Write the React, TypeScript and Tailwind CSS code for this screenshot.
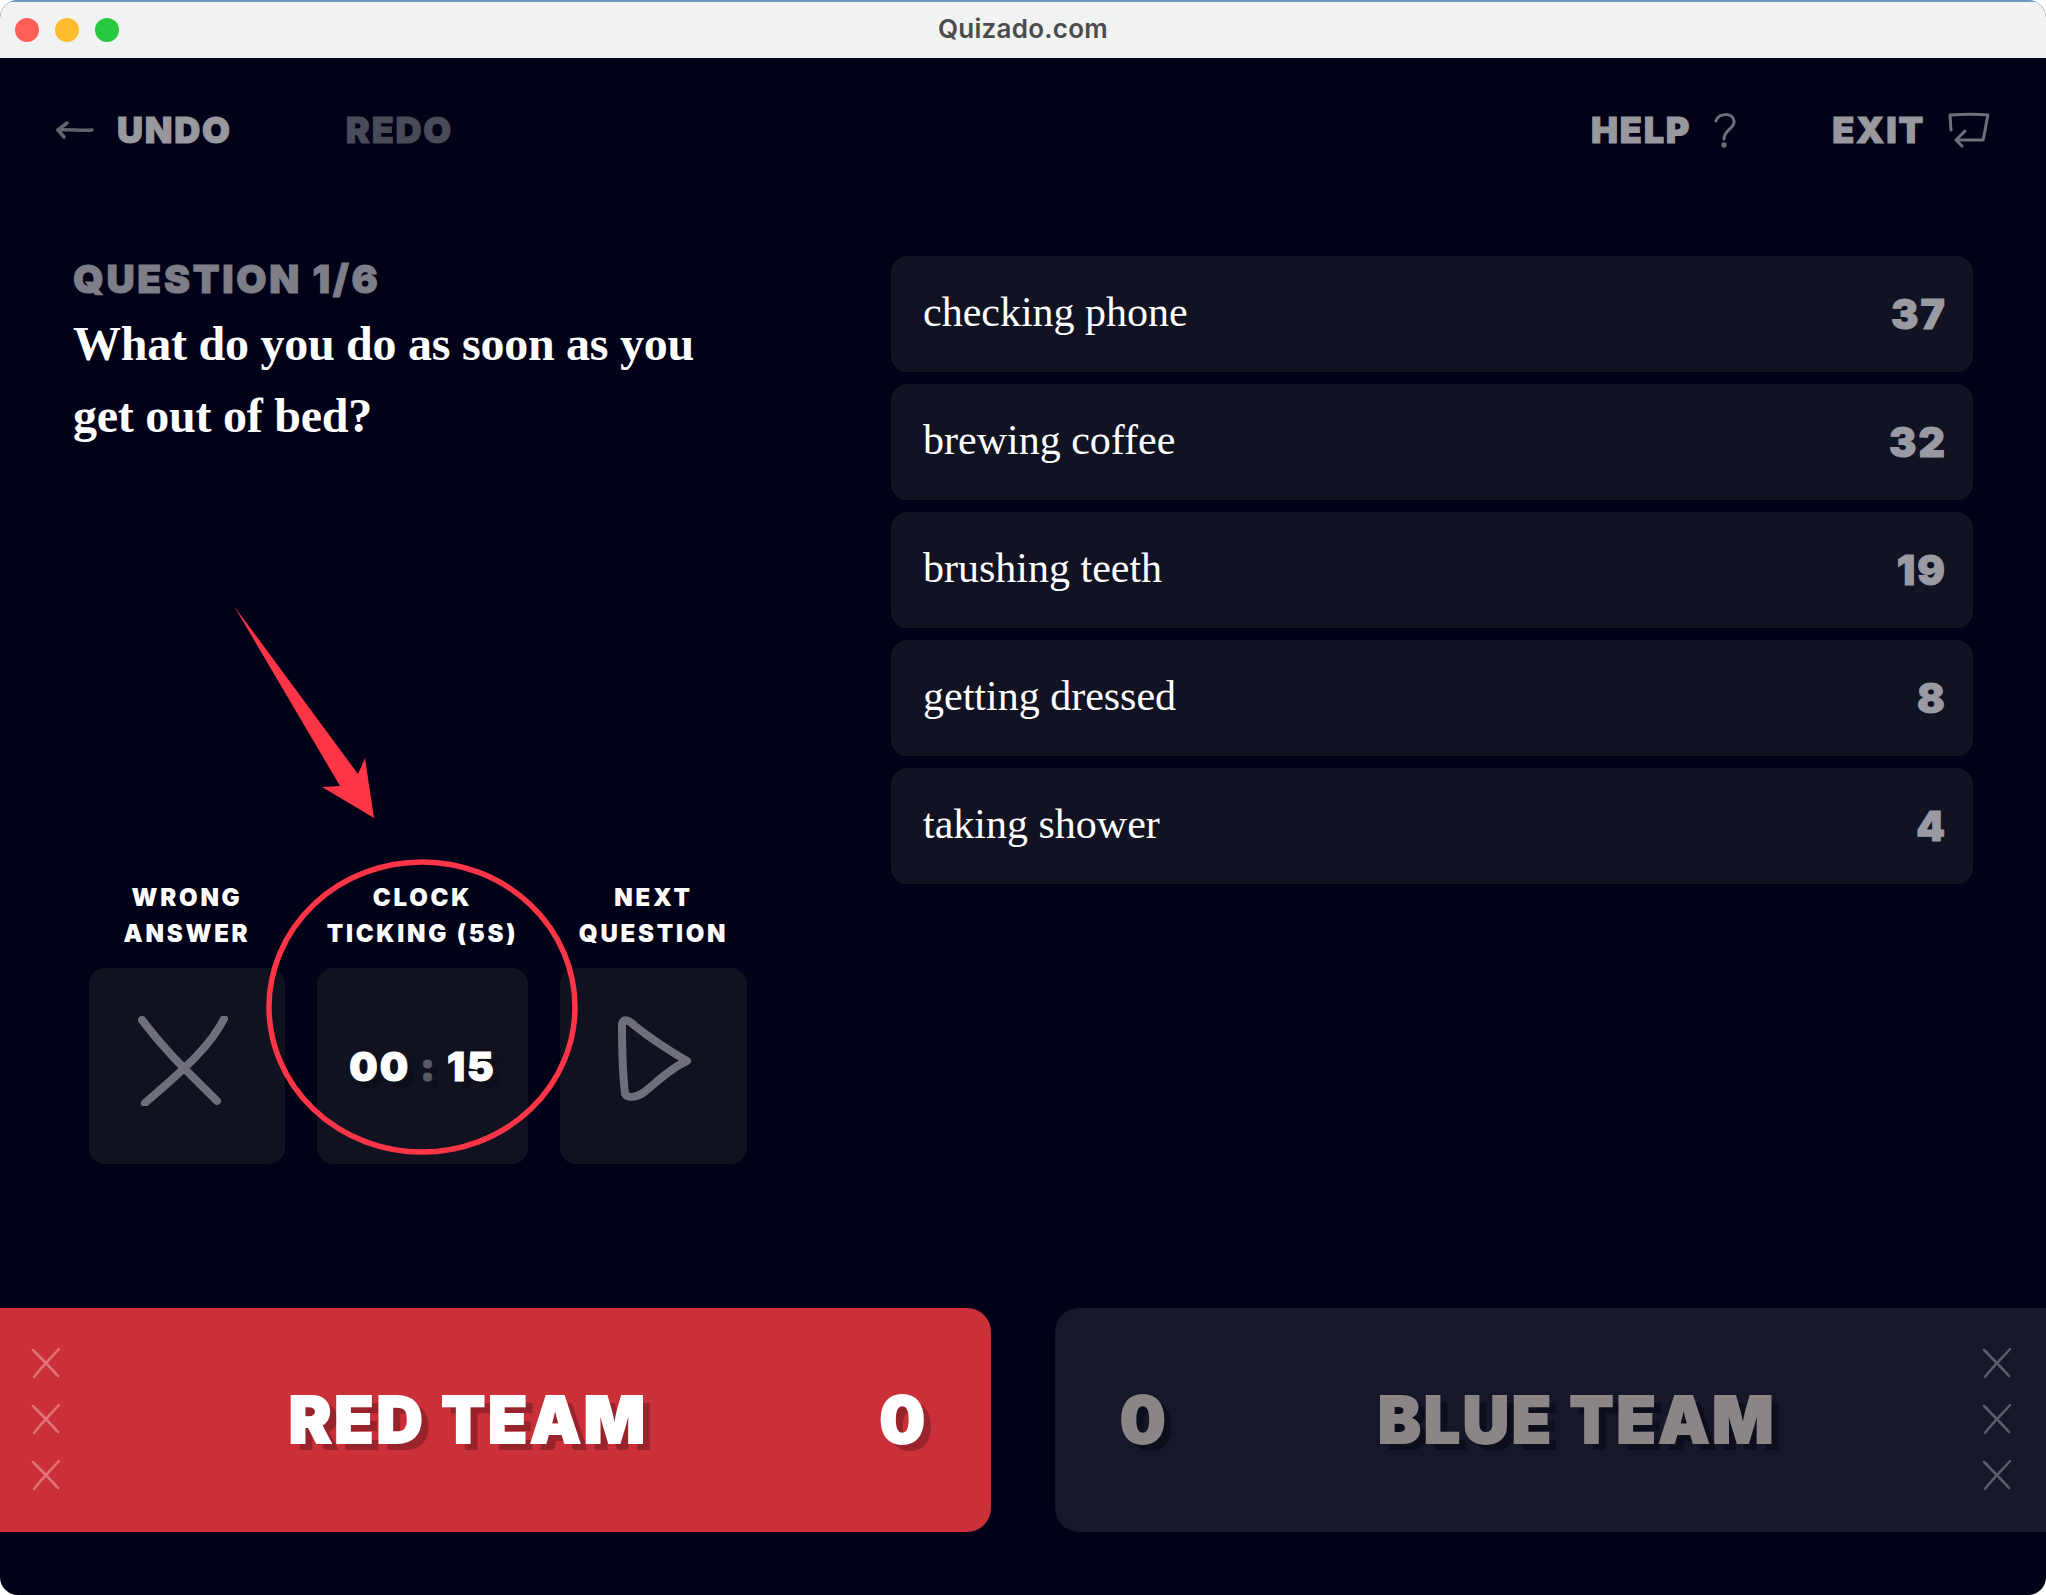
import React from 'react';

const display = "font-['Inter','Liberation_Sans',sans-serif] font-black tracking-[0.05em] [-webkit-text-stroke:1px_currentColor]";
const heavy = "font-['Inter','Liberation_Sans',sans-serif] font-black tracking-[0.045em] [-webkit-text-stroke:2px_currentColor]";
const slab = "font-['Liberation_Serif','DejaVu_Serif',serif]";

const answers = [
  { text: 'checking phone', points: 37 },
  { text: 'brewing coffee', points: 32 },
  { text: 'brushing teeth', points: 19 },
  { text: 'getting dressed', points: 8 },
  { text: 'taking shower', points: 4 },
];

function Strike({ className }: { className: string }) {
  return (
    <svg width="30" height="30" viewBox="0 0 30 30" fill="none" className={className} stroke="currentColor" strokeWidth="2.5" strokeLinecap="round">
      <path d="M2 2 C 10 10, 20 20, 27 28" />
      <path d="M28 1 C 20 10, 10 20, 3 29" />
    </svg>
  );
}

function TeamStrikes({ className }: { className: string }) {
  return (
    <div className="flex flex-col gap-[26px] -mt-[2px]">
      <Strike className={className} />
      <Strike className={className} />
      <Strike className={className} />
    </div>
  );
}

function ControlLabel({ children }: { children: React.ReactNode }) {
  return <div className="font-['Inter',sans-serif] font-black tracking-[0.115em] text-white text-[24px] leading-[36px] text-center whitespace-nowrap h-[72px] pt-[1px]">{children}</div>;
}

export default function App() {
  return (
    <div className="w-[2046px] h-[1595px] bg-white overflow-hidden">
      <div className="h-full rounded-[18px] overflow-hidden flex flex-col bg-[#010118]">
        {/* title bar */}
        <div className="relative h-[58px] shrink-0 bg-[#f1f3f2] border-t-2 border-[#6a9bc8] flex items-center justify-center pb-[3px]">
          <div className="absolute left-[15px] top-[16px] flex gap-[16px]">
            <span className="w-[24px] h-[24px] rounded-full bg-[#ff5f57]" />
            <span className="w-[24px] h-[24px] rounded-full bg-[#febc2e]" />
            <span className="w-[24px] h-[24px] rounded-full bg-[#28c840]" />
          </div>
          <span className="font-['Inter',sans-serif] font-semibold text-[26px] tracking-[0.01em] text-[#4c4c4c]">Quizado.com</span>
        </div>

        {/* top actions */}
        <div className="h-[144px] shrink-0 flex items-center justify-between pl-[56px] pr-[56px]">
          <div className="flex items-center">
            <svg width="38" height="20" viewBox="0 0 38 20" fill="none" stroke="#63636f" strokeWidth="3.5" strokeLinecap="round" strokeLinejoin="round" className="mr-[23px]">
              <path d="M2 10 C 12 9, 26 11, 36 10" />
              <path d="M11 3 L2 10 L8 17" />
            </svg>
            <span className={`${display} text-[36px] leading-none text-[#98989f]`}>UNDO</span>
            <span className={`${display} text-[36px] leading-none text-[#4a4b59] ml-[114px]`}>REDO</span>
          </div>
          <div className="flex items-center">
            <span className={`${display} text-[36px] leading-none text-[#98989f]`}>HELP</span>
            <svg width="22" height="36" viewBox="0 0 22 36" fill="none" stroke="#6f6f7b" strokeWidth="3" strokeLinecap="round" className="ml-[23px]">
              <path d="M2 9 C 4 1, 19 0, 20 9 C 21 17, 10 17, 10 27" />
              <circle cx="10" cy="33" r="1.2" />
            </svg>
            <span className={`${display} text-[36px] leading-none text-[#98989f] ml-[96px]`}>EXIT</span>
            <svg width="42" height="38" viewBox="0 0 42 38" fill="none" stroke="#6f6f7b" strokeWidth="3" strokeLinecap="round" strokeLinejoin="round" className="ml-[23px]">
              <path d="M3 19 L2 4 C 15 3, 30 3, 40 4 C 38 12, 37 22, 35 29 L9 29" />
              <path d="M17 20 L8 29 L14 35" />
            </svg>
          </div>
        </div>

        <div className="h-[54px] shrink-0" />

        {/* question + answers */}
        <div className="h-[908px] shrink-0 flex pl-[73px] pr-[73px]">
          <div className="w-[818px] shrink-0 flex flex-col justify-between">
            <div>
              <div className="font-['Inter',sans-serif] font-black tracking-[0.07em] [-webkit-text-stroke:1px_currentColor] text-[39px] leading-[46px] text-[#7e7e88]">QUESTION 1/6</div>
              <div className={`${slab} font-bold text-[48px] tracking-[-0.25px] leading-[72px] text-white w-[660px] pt-[6px]`}>What do you do as soon as you get out of bed?</div>
            </div>

            <div className="relative flex gap-[32px] pl-[16px]">
              <div className="w-[196px] flex flex-col items-center gap-[17px]">
                <ControlLabel>WRONG<br />ANSWER</ControlLabel>
                <div className="w-full h-[196px] rounded-[16px] bg-[#11121f] flex items-center justify-center">
                  <svg width="90" height="90" viewBox="0 0 90 90" fill="none" stroke="#6f6f7a" strokeWidth="8" strokeLinecap="round" className="-mt-[10px] -ml-[8px]">
                    <path d="M4 4 C 28 36, 52 58, 79 85" />
                    <path d="M86 3 C 72 30, 50 50, 7 87" />
                  </svg>
                </div>
              </div>
              <div className="w-[211px] flex flex-col items-center gap-[17px]">
                <ControlLabel>CLOCK<br />TICKING (5S)</ControlLabel>
                <div className="w-full h-[196px] rounded-[16px] bg-[#11121f] flex items-center justify-center pt-[2px]">
                  <span className={`${display} text-[40px] leading-none text-white whitespace-nowrap [text-shadow:7px_7px_0_#0d0e1a]`}>
                    00 <span className="text-[#5a5a66]">:</span> 15
                  </span>
                </div>
              </div>
              <div className="w-[187px] flex flex-col items-center gap-[17px]">
                <ControlLabel>NEXT<br />QUESTION</ControlLabel>
                <div className="w-full h-[196px] rounded-[16px] bg-[#11121f] flex items-center justify-center">
                  <svg width="78" height="88" viewBox="0 0 78 88" fill="none" stroke="#6f6f7a" strokeWidth="8" strokeLinecap="round" strokeLinejoin="round" className="-mt-[12px]">
                    <path d="M7 8 C 8 2, 14 4, 20 10 C 35 22, 55 35, 72 45 C 55 52, 40 68, 28 77 C 20 82, 12 82, 10 78 C 8 60, 7 30, 7 8 Z" />
                  </svg>
                </div>
              </div>

              {/* annotation: arrow and circle drawn over the controls */}
              <svg width="400" height="560" viewBox="0 0 400 560" className="absolute left-[120px] -top-[280px] pointer-events-none" fill="none">
                <polygon points="41,7 165,175 172,159 181,219 129,188 147,187" fill="#fd3546" />
                <ellipse cx="229" cy="408" rx="153" ry="145" stroke="#fd3546" strokeWidth="5.5" />
              </svg>
            </div>
          </div>

          <div className="flex-1 flex flex-col gap-[12px]">
            {answers.map((a) => (
              <div key={a.text} className="h-[116px] rounded-[16px] bg-[#111323] flex items-center justify-between pl-[32px] pr-[26px]">
                <span className={`${slab} text-[42px] text-white leading-none pb-[5px]`}>{a.text}</span>
                <span className={`${display} text-[41px] leading-none text-[#9a9aa3]`}>{a.points}</span>
              </div>
            ))}
          </div>
        </div>

        <div className="h-[144px] shrink-0" />

        {/* teams */}
        <div className="h-[224px] shrink-0 flex gap-[64px]">
          <div className="w-[991px] rounded-r-[24px] bg-[#cb2f38] flex items-center pl-[31px] pr-[63px]">
            <TeamStrikes className="text-[#e07378]" />
            <span className={`${heavy} flex-1 text-center text-[64px] leading-none text-white [text-shadow:8px_7px_0_#99232a] pl-[52px] pr-[56px]`}>RED TEAM</span>
            <span className={`${heavy} text-[64px] leading-none text-white [text-shadow:8px_7px_0_#99232a]`}>0</span>
          </div>
          <div className="flex-1 rounded-l-[24px] bg-[#16182a] flex items-center pl-[65px] pr-[34px]">
            <span className={`${heavy} text-[64px] leading-none text-[#8b8585] [text-shadow:8px_7px_0_#0d0e1c]`}>0</span>
            <span className={`${heavy} flex-1 text-center text-[64px] leading-none text-[#8b8585] [text-shadow:8px_7px_0_#0d0e1c] pl-[36px] pr-[32px]`}>BLUE TEAM</span>
            <TeamStrikes className="text-[#5c5d68]" />
          </div>
        </div>
      </div>
    </div>
  );
}
